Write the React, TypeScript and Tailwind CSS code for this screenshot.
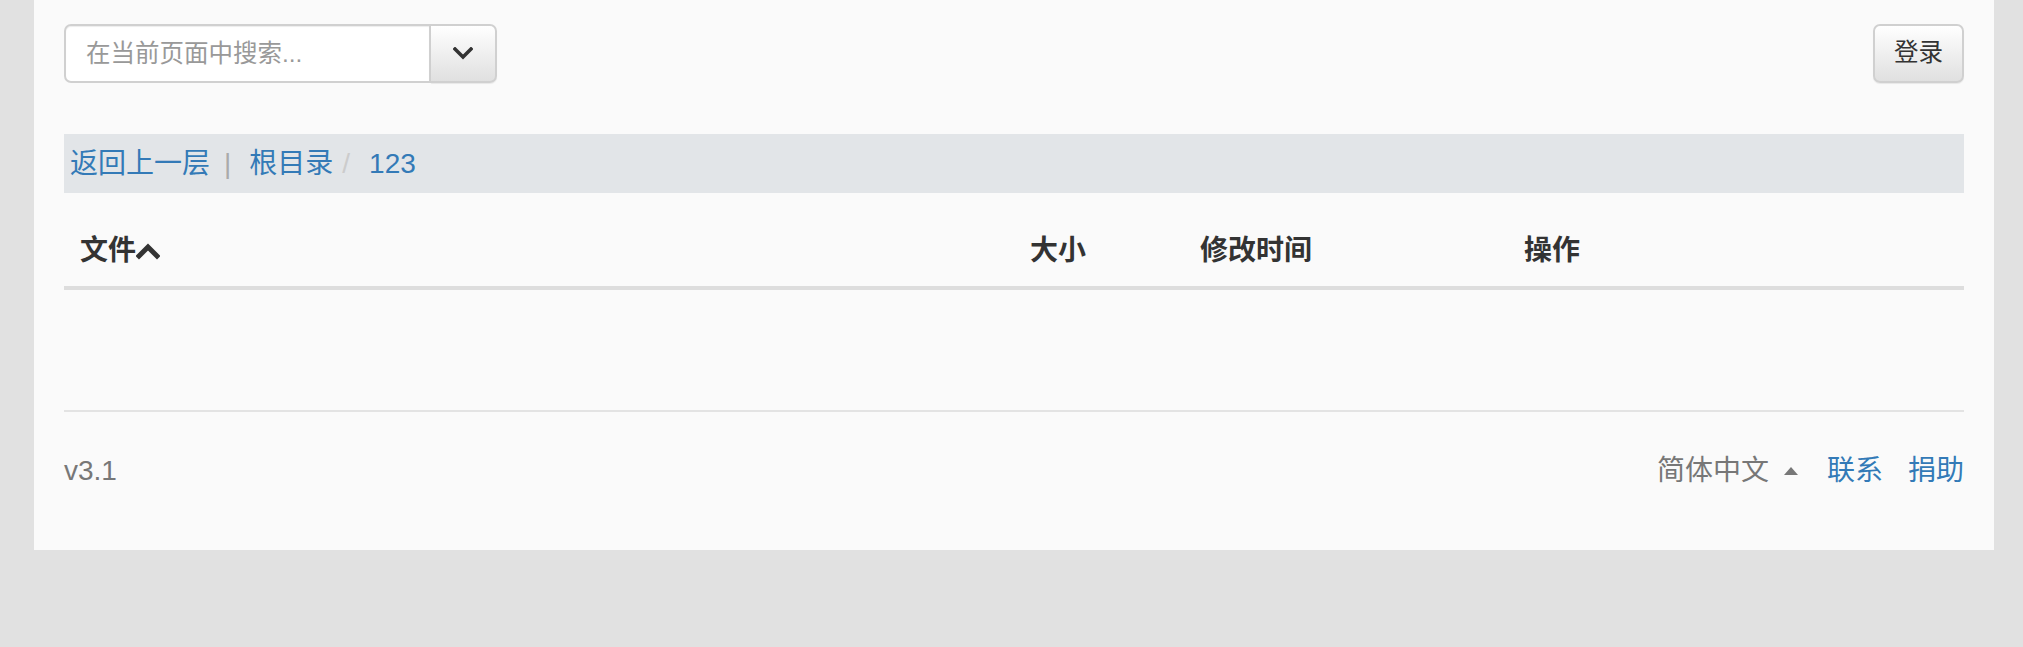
import React from 'react';

const font = { fontFamily: '"Liberation Sans", "Noto Sans CJK SC", sans-serif' };

const ChevronDown: React.FC = () => (
  <svg width="20" height="13" viewBox="0 0 20 13" fill="none">
    <polyline points="2,2 10,10 18,2" stroke="#333" strokeWidth="3.5" strokeLinecap="square" />
  </svg>
);

const ChevronUp: React.FC = () => (
  <svg width="24" height="18" viewBox="0 0 24 18" fill="none">
    <polyline points="3,14 12,5 21,14" stroke="#333" strokeWidth="5" strokeLinecap="square" />
  </svg>
);

const SearchBar: React.FC = () => (
  <div className="flex h-[59px]">
    <input
      className="w-[367px] h-full bg-white border-2 border-[#d0d0d0] rounded-l-[7px] px-[20px] text-[24.5px] text-[#555] placeholder:text-[#999] outline-none shadow-[inset_0_1px_1px_rgba(0,0,0,0.075)]"
      placeholder="在当前页面中搜索..."
      style={font}
    />
    <button className="w-[66px] h-full flex items-center justify-center border-2 border-l-0 border-[#d0d0d0] rounded-r-[7px] bg-gradient-to-b from-white to-[#e0e0e0] shadow-[0_1px_1px_rgba(0,0,0,0.075)]">
      <ChevronDown />
    </button>
  </div>
);

const Breadcrumb: React.FC = () => (
  <div className="h-[59px] bg-[#e2e5e8] flex items-center pl-[6px] text-[28px] leading-none">
    <a className="text-[#337ab7]">返回上一层</a>
    <span className="ml-[14px] text-[#aaa]">|</span>
    <a className="ml-[18px] text-[#337ab7]">根目录</a>
    <span className="ml-[9px] text-[#ccc]">/</span>
    <span className="ml-[19px] text-[#337ab7]">123</span>
  </div>
);

const TableHeader: React.FC = () => (
  <div className="mt-[22px] grid grid-cols-[950px_170px_324px_456px] h-[75px] items-center border-b-4 border-[#ddd] text-[28px] font-bold text-[#333]">
    <div className="pl-[16px] flex items-center">
      文件
      <ChevronUp />
    </div>
    <div className="pl-[16px]">大小</div>
    <div className="pl-[16px]">修改时间</div>
    <div className="pl-[16px]">操作</div>
  </div>
);

const Footer: React.FC = () => (
  <div className="mt-[120px] border-t-2 border-[#e3e3e3] pt-[39px] flex items-center justify-between h-[81px] text-[28px] leading-[40px]">
    <span className="text-[#777]">v3.1</span>
    <div className="flex items-center">
      <span className="text-[#777]">简体中文</span>
      <svg className="ml-[15px]" width="14" height="8" viewBox="0 0 14 8">
        <polygon points="0,8 7,0 14,8" fill="#777" />
      </svg>
      <a className="ml-[29px] text-[#337ab7]">联系</a>
      <a className="ml-[25px] text-[#337ab7]">捐助</a>
    </div>
  </div>
);

const App: React.FC = () => {
  return (
    <div className="min-h-screen bg-[#e1e1e1]" style={font}>
      <div className="ml-[34px] w-[1960px] bg-[#fafafa] px-[30px] pt-[24px] pb-[59px]">
        <div className="flex justify-between">
          <SearchBar />
          <button className="w-[91px] h-[59px] border-2 border-[#d0d0d0] rounded-[7px] bg-gradient-to-b from-white to-[#e0e0e0] text-[24.5px] text-[#333] shadow-[0_1px_1px_rgba(0,0,0,0.075)]">
            登录
          </button>
        </div>
        <div className="mt-[51px]">
          <Breadcrumb />
        </div>
        <TableHeader />
        <Footer />
      </div>
    </div>
  );
};

export default App;
